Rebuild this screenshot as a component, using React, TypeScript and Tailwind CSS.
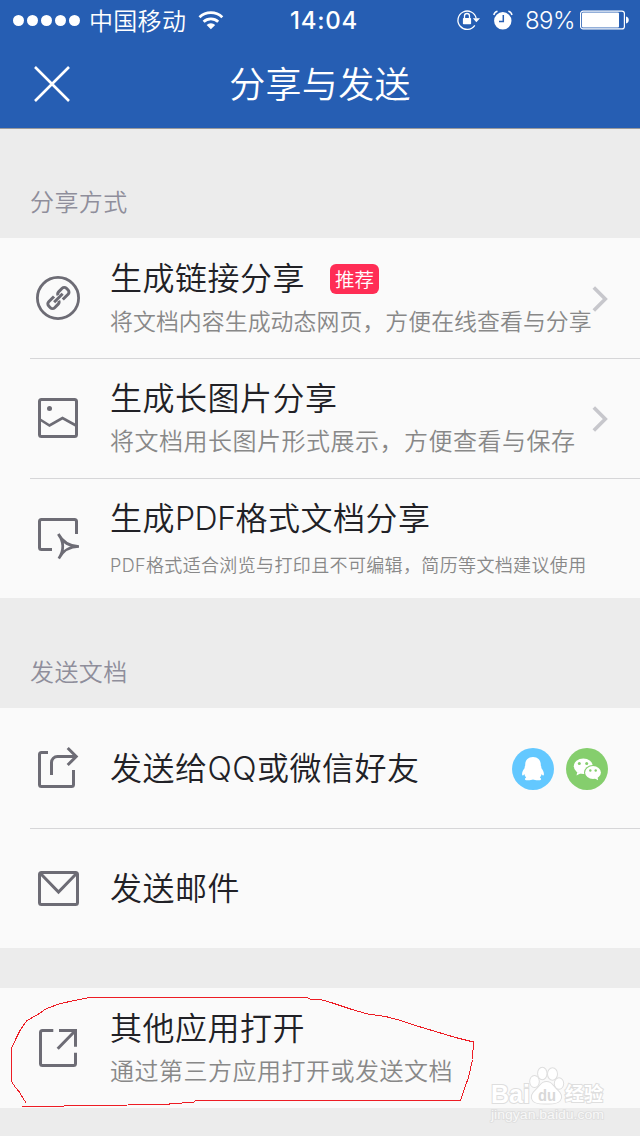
import type { ReactNode } from "react";

const LinkIcon = () => (
  <>
    <circle cx="28" cy="30" r="20.6" strokeWidth="2.8" />
    <g transform="translate(28.4 30) rotate(-45)">
      <path d="M-2 -4.2H-9.5a3 3 0 0 0-3 3v2.4a3 3 0 0 0 3 3H-4.5a3 3 0 0 0 2.8-2" />
      <path d="M2 4.2H9.5a3 3 0 0 0 3-3v-2.4a3 3 0 0 0-3-3H4.5a3 3 0 0 0-2.8 2" />
      <path d="M-6 0H6" />
    </g>
  </>
);

const ImageIcon = () => (
  <>
    <rect x="9.5" y="11.5" width="37" height="37" rx="2" />
    <circle cx="19.5" cy="20.5" r="2.5" fill="#6d6c75" stroke="none" />
    <path d="M10 31.5L19.5 37.5L32.5 30L46 37.5" strokeWidth="2.6" />
  </>
);

const PdfIcon = () => (
  <>
    <path d="M22 41.5H11.5a2 2 0 0 1-2-2V13.5a2 2 0 0 1 2-2H44.5a2 2 0 0 1 2 2V26" />
    <path d="M28.3 26Q37 38 28.8 50.5M28.3 26Q35 38.5 49 38.5M28.8 50.5Q35 38.5 49 38.5" strokeWidth="2.7" />
  </>
);

const SendIcon = () => (
  <>
    <path d="M18 14.5H11.5a2 2 0 0 0-2 2V46.5a2 2 0 0 0 2 2H41.5a2 2 0 0 0 2-2V32" />
    <path d="M21.5 37V24.5a6 6 0 0 1 6-6H46M37.7 10L46.2 18.5L37.7 27" />
  </>
);

const MailIcon = () => (
  <>
    <rect x="9.5" y="14.5" width="38" height="32" rx="2" />
    <path d="M10.5 15.5L28.5 34L46.5 15.5" />
  </>
);

const OpenIcon = () => (
  <>
    <path d="M23.3 12.5H12.5a2 2 0 0 0-2 2V45.5a2 2 0 0 0 2 2H43.5a2 2 0 0 0 2-2V34.7" />
    <path d="M29 12.5H45.5V28.7M27.7 30.8L45 13" />
  </>
);

const Chevron = () => (
  <svg className="absolute top-12 right-8 h-7 w-4" viewBox="0 0 16 28" fill="none" stroke="#c7c7cc" strokeWidth="3.6">
    <path d="M1.8 1.5L13.3 13L1.8 24.5" />
  </svg>
);

type RowProps = {
  icon: ReactNode;
  title: ReactNode;
  last?: boolean;
  chevron?: boolean;
  badge?: string;
  children?: ReactNode;
};

function Row({ icon, title, last, chevron, badge, children }: RowProps) {
  return (
    <div className="relative flex h-[120px] pl-[30px]">
      <svg className="mt-[30px] h-[60px] w-[56px] shrink-0" viewBox="0 0 56 60" fill="none" stroke="#6d6c75" strokeWidth="3">
        {icon}
      </svg>
      <div className={`ml-6 ${children ? "pt-[21px]" : "pt-[41px]"}`}>
        <div className="flex items-center">
          <h2 className="text-[32px] leading-10 tracking-[0.5px] whitespace-nowrap text-[#212126]">{title}</h2>
          {badge && (
            <span className="ml-[25px] h-[30px] w-[49px] rounded-md bg-[#ff2d55] text-center text-[19.5px] leading-8 text-white">
              {badge}
            </span>
          )}
        </div>
        {children}
      </div>
      {chevron && <Chevron />}
      {!last && <div className="absolute right-0 bottom-[-1px] left-[30px] z-10 h-px bg-[#d6d6d8]" />}
    </div>
  );
}

function StatusBar() {
  return (
    <div className="relative flex h-10 items-center text-white">
      <div className="ml-[13px] flex gap-[3px]">
        {[0, 1, 2, 3, 4].map((i) => (
          <span key={i} className="size-[11px] rounded-full bg-white" />
        ))}
      </div>
      <span className="mt-[3px] ml-[9px] text-[24px] leading-10 tracking-[0.3px]">中国移动</span>
      <svg className="ml-3 h-[19px] w-[26px]" viewBox="0 0 26 19" fill="none" stroke="#fff" strokeWidth="2.8">
        <path d="M1.5 6.3a16.4 16.4 0 0 1 22.8 0" />
        <path d="M5.6 10.7a10.6 10.6 0 0 1 14.6 0" />
        <path d="M12.9 18.2L8.6 13.9a6.2 6.2 0 0 1 8.6 0z" fill="#fff" stroke="none" />
      </svg>
      <span className="absolute left-[290px] mt-0.5 font-[Inter] text-[24px] leading-10 font-medium tracking-[0.75px]">14:04</span>
      <div className="absolute left-[456px] flex h-10 items-center">
        <svg className="h-[22px] w-[25px]" viewBox="0 0 25 22" fill="none" stroke="#fff" strokeWidth="1.3">
          <path d="M18.8 16.4A9.2 9.2 0 1 1 20.2 9.5" />
          <path d="M16.8 9.2H24L20.4 13.2z" fill="#fff" stroke="none" />
          <rect x="6.9" y="8.9" width="8.2" height="6.4" rx="0.8" fill="#fff" stroke="none" />
          <path d="M8.5 9.5V7a2.5 2.5 0 0 1 5 0V9.5" />
        </svg>
        <svg className="ml-3 h-[20px] w-[20px]" viewBox="0 0 20 20" fill="none">
          <circle cx="9.8" cy="10.8" r="8.7" fill="#fff" />
          <path d="M0.8 5a5 5 0 0 1 3.7-3.7M19 5a5 5 0 0 0-3.7-3.7" stroke="#fff" strokeWidth="1.5" />
          <path d="M10.3 5V11.5H6" stroke="#265eb3" strokeWidth="1.5" />
        </svg>
        <span className="mt-0.5 ml-3 font-[Inter] text-[24px] leading-10 tracking-[-0.6px]">89%</span>
      </div>
      <svg className="absolute left-[580px] h-[20px] w-[50px]" viewBox="0 0 50 20" fill="none">
        <rect x="0.6" y="1.1" width="43.8" height="17.8" rx="2.5" stroke="#fff" strokeWidth="1.2" />
        <rect x="2" y="2.5" width="37" height="15" rx="1" fill="#fff" />
        <path d="M46 6.5a3.6 3.6 0 0 1 0 7z" fill="#fff" />
      </svg>
    </div>
  );
}

function SocialIcons() {
  return (
    <div className="absolute top-10 right-8 flex gap-3">
      <svg className="size-[42px]" viewBox="0 0 42 42">
        <circle cx="21" cy="21" r="21" fill="#63c8ff" />
        <path
          fill="#fff"
          d="M21 9c-5.3 0-8 3.6-7.8 8.4-.5 1.1-.8 1.8-.5 2.6-1.9 2.300-3 4.900-2.500 7 .3 1 1.200.3 2.100-1.100.3 1.500.9 2.700 1.900 3.600-1.100.5-1.500 1.200-1.200 1.900.8 1.300 6.200.9 8 0 1.800.9 7.200 1.300 8 0 .3-.7-.1-1.400-1.200-1.900 1-.9 1.600-2.100 1.900-3.600.9 1.400 1.800 2.100 2.100 1.100.5-2.100-.6-4.700-2.500-7 .3-.8 0-1.500-.5-2.600C29 12.600 26.300 9 21 9z"
        />
      </svg>
      <svg className="size-[42px]" viewBox="0 0 42 42">
        <circle cx="21" cy="21" r="21" fill="#85ce6d" />
        <path fill="#fff" d="M11.3 24l-.8 3.500 4.200-2.300z" />
        <ellipse cx="17.3" cy="18.3" rx="9.5" ry="7.8" fill="#fff" />
        <ellipse cx="27" cy="24.5" rx="9" ry="7.6" fill="#85ce6d" />
        <ellipse cx="27" cy="24.5" rx="7.9" ry="6.5" fill="#fff" />
        <path fill="#fff" d="M28.5 30.200l3.600 2-.6-3.500z" />
        <g fill="#85ce6d">
          <circle cx="13.3" cy="15.5" r="1.5" />
          <circle cx="20.7" cy="15.5" r="1.5" />
          <circle cx="24.3" cy="22.5" r="1.2" />
          <circle cx="29.7" cy="22.5" r="1.2" />
        </g>
      </svg>
    </div>
  );
}

function Watermark() {
  return (
    <svg
      className="absolute top-[1060px] left-[486px] z-20 h-[66px] w-[124px]"
      viewBox="0 0 124 66"
      fill="#fff"
      stroke="#dedede"
      strokeWidth="2"
      paintOrder="stroke"
    >
      <ellipse cx="48.5" cy="21.5" rx="4.3" ry="5.5" />
      <ellipse cx="56.3" cy="13.5" rx="4.2" ry="5.8" />
      <ellipse cx="66.5" cy="14" rx="4.5" ry="5.8" />
      <ellipse cx="73" cy="23.5" rx="4.2" ry="5.3" />
      <path d="M60.5 22c-5.500 0-7 5-10.500 8s-5.500 7-3 10.500 9 3 13.500 3 10.500.5 13.300-3 .7-7.500-2.800-10.500S66 22 60.500 22z" />
      <text x="5" y="43" fontSize="25" fontWeight="700" fontFamily="Liberation Sans, sans-serif" textLength="39" lengthAdjust="spacingAndGlyphs">
        Bai
      </text>
      <text x="52" y="41" fontSize="17" fontWeight="700" fill="#d8d8d8" stroke="none" fontFamily="Liberation Sans, sans-serif" textLength="18" lengthAdjust="spacingAndGlyphs">
        du
      </text>
      <text x="79" y="41" fontSize="19" fontWeight="700" fontFamily="Noto Sans CJK SC, sans-serif" textLength="38">
        经验
      </text>
      <text x="5" y="59" fontSize="12" fill="#f8f8f8" strokeWidth="1.6" fontFamily="Liberation Sans, sans-serif" textLength="113" lengthAdjust="spacingAndGlyphs">
        jingyan.baidu.com
      </text>
    </svg>
  );
}

export default function App() {
  return (
    <div className="relative h-[1136px] w-[640px] overflow-hidden bg-[#ececec] font-[Inter,'Noto_Sans_CJK_SC',sans-serif] font-[350]">
      <header className="h-[129px] border-b border-[#9a9a9c] bg-[#265eb3]">
        <StatusBar />
        <div className="relative flex h-[88px] justify-center">
          <svg className="absolute top-[26px] left-[34px] size-9" viewBox="0 0 36 36" stroke="#fff" strokeWidth="2.6">
            <path d="M1 1L35 35M35 1L1 35" />
          </svg>
          <h1 className="text-[36px] leading-[90px] tracking-[0.3px] text-white">分享与发送</h1>
        </div>
      </header>

      <div className="h-[109px] pt-14 pl-[30px] text-[24px] leading-9 tracking-[0.4px] text-[#8f8e9b]">分享方式</div>

      <section className="bg-[#fafafa]">
        <Row icon={<LinkIcon />} title="生成链接分享" badge="推荐" chevron>
          <p className="mt-2 text-[22.9px] leading-[30px] tracking-[0.05px] whitespace-nowrap text-[#888]">将文档内容生成动态网页，方便在线查看与分享</p>
        </Row>
        <Row icon={<ImageIcon />} title="生成长图片分享" chevron>
          <p className="mt-2 text-[24px] leading-[30px] tracking-[0.5px] whitespace-nowrap text-[#888]">将文档用长图片形式展示，方便查看与保存</p>
        </Row>
        <Row icon={<PdfIcon />} title={<>生成<span className="tracking-[-0.5px]">PDF</span>格式文档分享</>} last>
          <p className="mt-3 text-[18px] leading-[30px] tracking-[0.36px] whitespace-nowrap text-[#888]">PDF格式适合浏览与打印且不可编辑，简历等文档建议使用</p>
        </Row>
      </section>

      <div className="h-[110px] pt-[57px] pl-[30px] text-[24px] leading-9 tracking-[0.4px] text-[#8f8e9b]">发送文档</div>

      <section className="relative bg-[#fafafa]">
        <Row icon={<SendIcon />} title="发送给QQ或微信好友" />
        <Row icon={<MailIcon />} title="发送邮件" last />
        <SocialIcons />
      </section>

      <section className="mt-10 bg-[#fafafa]">
        <Row icon={<OpenIcon />} title="其他应用打开" last>
          <p className="mt-2 text-[24px] leading-[30px] tracking-[0.5px] whitespace-nowrap text-[#888]">通过第三方应用打开或发送文档</p>
        </Row>
      </section>

      {/* hand-drawn highlight */}
      <svg className="absolute top-[980px] left-0 z-10 h-[140px] w-[490px]" viewBox="0 0 490 140" fill="none" stroke="#ed1c24" strokeWidth="1" shapeRendering="crispEdges">
        <path d="M26.5 123.5L22.5 117.5L19.5 112L15.5 107.5L11.5 101.5V68.5L16.5 57.5L20.5 49.5L26.5 41L38.5 34L46.5 28.5L60.5 23.5L74.5 20.5L89.5 17.5H306.5L311 19.5H320.5L331 22.5L352 29.5L367.5 34L385.5 36.5L399 40L415.5 45.5L435.5 51.5L455.5 57.5L471.5 61.5H473.5L472.5 79.5L468.5 97.5L464.5 108.5L460.5 120.5H195.5L193.5 122.5L171.5 123.5L167.5 124.5L88.5 125.5L40.5 126.5H22" />
      </svg>
      <Watermark />
    </div>
  );
}
